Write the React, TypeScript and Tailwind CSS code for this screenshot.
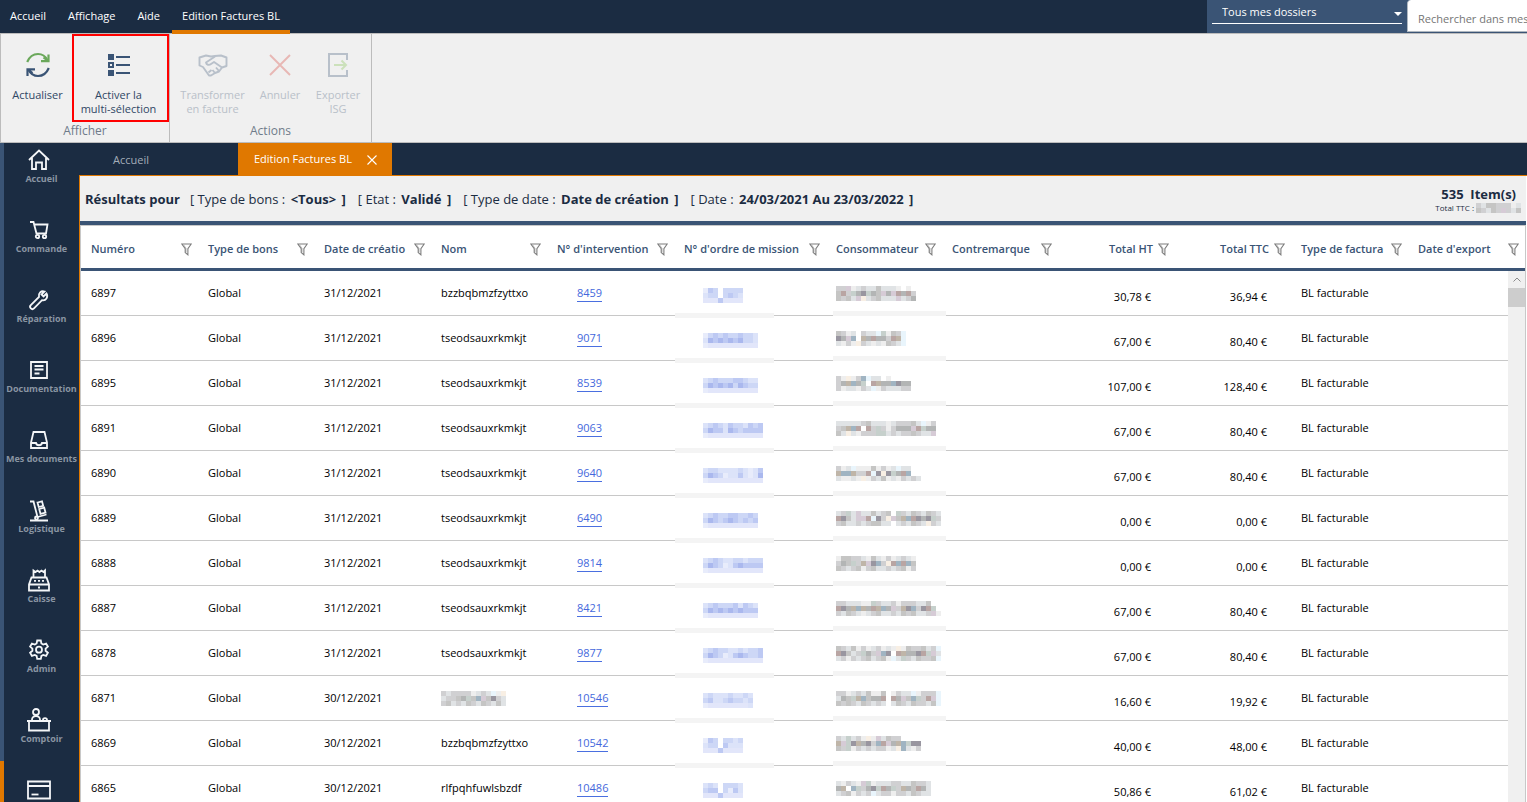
import { ReactNode } from 'react'
import clsx from 'clsx'

type Tone = 'blue' | 'grey'

interface Row {
    numero: string
    date: string
    nom: string | string[]
    intervention: string
    mission: string[]
    consommateur: string[]
    ht: string
    ttc: string
}

const BLUE: Record<string, string> = {
    a: '#e8ecfb',
    b: '#dce3f9',
    c: '#cdd7f6',
    d: '#bdc9f3',
    e: '#aab8ee',
    f: '#e2e6fa',
}

const GREY: Record<string, string> = {
    a: '#eeeeee',
    b: '#e0e3e5',
    c: '#d0d0d2',
    d: '#c5c5c4',
    e: '#b3b5b5',
    f: '#9996a0',
    g: '#b9a5a3',
    h: '#a0b4c2',
    i: '#c6d0cc',
    j: '#bfb5a8',
    k: '#d6cbd6',
    l: '#e9f5fc',
    m: '#f8efe4',
}

const rows: Row[] = [
    {
        numero: '6897', date: '31/12/2021', nom: 'bzzbqbmzfzyttxo', intervention: '8459', ht: '30,78 €', ttc: '36,94 €',
        mission: ['adc.cccc', 'bcc.cdcb', 'fffdffff'],
        consommateur: ['cckabcbbdbbba.a.', 'dgciefiedkekgegc', 'dcdbkmbcdbbbkbce'],
    },
    {
        numero: '6896', date: '31/12/2021', nom: 'tseodsauxrkmkjt', intervention: '9071', ht: '67,00 €', ttc: '80,40 €',
        mission: ['acdcdccdccb', 'bedededeccb', 'affffffffff'],
        consommateur: ['dcab.cbbliadcl', 'fekh.jegeecgjl', 'bacamcbabadcbl'],
    },
    {
        numero: '6895', date: '31/12/2021', nom: 'tseodsauxrkmkjt', intervention: '8539', ht: '107,00 €', ttc: '128,40 €',
        mission: ['bcdcccddcbb', 'cededecedcc', 'affffffffff'],
        consommateur: ['camachlbb.a....', 'cejhei.gjeehfee', 'cabbacblacbbbcc'],
    },
    {
        numero: '6891', date: '31/12/2021', nom: 'tseodsauxrkmkjt', intervention: '9063', ht: '67,00 €', ttc: '80,40 €',
        mission: ['bcdcbdccbdcd', 'ceddbedcdddd', 'afffffffffff'],
        consommateur: ['bbbbbcdbbbabcccdblac', 'cdjhg.gcicaceeekgiee', 'dbmbaccciibcbccdcbbk'],
    },
    {
        numero: '6890', date: '31/12/2021', nom: 'tseodsauxrkmkjt', intervention: '9640', ht: '67,00 €', ttc: '80,40 €',
        mission: ['bccbbbbcbabd', 'cedcabbdbabe', 'afffffffffff'],
        consommateur: ['cablaaadacablbb..', 'jhhjccglfmfiegh..', 'baabamacbdabacbcb'],
    },
    {
        numero: '6889', date: '31/12/2021', nom: 'tseodsauxrkmkjt', intervention: '6490', ht: '0,00 €', ttc: '0,00 €',
        mission: ['bcdccddccdc', 'cedcdedcdcd', 'affffffffff'],
        consommateur: ['bcibkbbdbcd.icbdcbdcb', 'gfdbkkglfcmkdjhgfefic', 'cdbbcbcddbb.bcbdcbmcb'],
    },
    {
        numero: '6888', date: '31/12/2021', nom: 'tseodsauxrkmkjt', intervention: '9814', ht: '0,00 €', ttc: '0,00 €',
        mission: ['bcdcbbccbccc', 'cedcabdedddd', 'afffffffffff'],
        consommateur: ['addccbadbacabcba', 'cedicjkfhcmghghd', 'dcbcdacdbbcbcdac'],
    },
    {
        numero: '6887', date: '31/12/2021', nom: 'tseodsauxrkmkjt', intervention: '8421', ht: '67,00 €', ttc: '80,40 €',
        mission: ['bcdcccdbdcb', 'cededededdd', 'affffffffff'],
        consommateur: ['ccbbbaaicbbcacccbbd..', 'gfejhjegjhekcjfhcfgi.', 'cbdcbabcdbbcbdcdbbcka'],
    },
    {
        numero: '6878', date: '31/12/2021', nom: 'tseodsauxrkmkjt', intervention: '9877', ht: '67,00 €', ttc: '80,40 €',
        mission: ['bcdccbbcbccd', 'cedcabdedccd', 'afffffffffff'],
        consommateur: ['dcbdacabcabamadccdbcl', 'gfdbcieckhf.gjeefgikb', 'bcacbcdbcdalbicbdccdl'],
    },
    {
        numero: '6871', date: '30/12/2021', nom: ['cbccccabcblam', 'bccdeidhkdfcb', 'cdbcbdcbdcbdb'], intervention: '10546', ht: '16,60 €', ttc: '19,92 €',
        mission: ['bcbbbcbbcb', 'cdbbcdccbc', 'affffffffb'],
        consommateur: ['ccabcbdaad.acbblacccl', 'bedijhdeeg.gekdhicgkl', 'dcdcbdcbcb.bdcbdccbdl'],
    },
    {
        numero: '6869', date: '30/12/2021', nom: 'bzzbqbmzfzyttxo', intervention: '10542', ht: '40,00 €', ttc: '48,00 €',
        mission: ['adc.ccbc', 'bcc.dbbb', 'fffdffff'],
        consommateur: ['cbibcamakbdcc....', 'jkifjefchgkejhiff', 'dciacbcbccabmhbac'],
    },
    {
        numero: '6865', date: '30/12/2021', nom: 'rlfpqhfuwlsbzdf', intervention: '10486', ht: '50,86 €', ttc: '61,02 €',
        mission: ['bcb.cccb', 'cdd.cadb', 'fffdffff'],
        consommateur: ['bacbakiabbbccbbdccb', 'ej.hicefigeicjedgeb', 'bcdacbclbccaccbdcbb'],
    },
]

const columns = [
    { label: 'Numéro', width: 'w-[117px]' },
    { label: 'Type de bons', width: 'w-[116px]' },
    { label: 'Date de créatio', width: 'w-[117px]' },
    { label: 'Nom', width: 'w-[116px]' },
    { label: "N° d'intervention", width: 'w-[127px]' },
    { label: "N° d'ordre de mission", width: 'w-[152px]' },
    { label: 'Consommateur', width: 'w-[116px]' },
    { label: 'Contremarque', width: 'w-[116px]' },
    { label: 'Total HT', width: 'w-[117px]', right: true },
    { label: 'Total TTC', width: 'w-[116px]', right: true },
    { label: 'Type de factura', width: 'w-[117px]' },
    { label: "Date d'export", width: 'w-[117px]' },
]

const filters = [
    ['Type de bons', '<Tous>'],
    ['Etat', 'Validé'],
    ['Type de date', 'Date de création'],
    ['Date', '24/03/2021 Au 23/03/2022'],
]

function Mosaic({ lines, tone }: { lines: string[]; tone: Tone }) {
    const palette = tone === 'blue' ? BLUE : GREY
    const cols = Math.max(...lines.map((l) => l.length))
    return (
        <svg width={cols * 5} height={lines.length * 5} shapeRendering="crispEdges" aria-hidden="true" className="block shrink-0">
            {lines.map((line, y) =>
                line.split('').map((c, x) =>
                    palette[c] ? <rect key={`${x}-${y}`} x={x * 5} y={y * 5} width="5" height="5" fill={palette[c]} /> : null
                )
            )}
        </svg>
    )
}

function FilterIcon() {
    return (
        <svg width="11" height="13" viewBox="0 0 11 13" fill="none" stroke="#7d7d7d" className="shrink-0">
            <path d="M.8 1h9.4L6.9 5.6v6.2L4.2 9.6v-4z" strokeWidth="1.1" />
            <path d="M2.5 1.8 5 5.4v4" strokeWidth=".8" opacity=".7" />
        </svg>
    )
}

/* Ribbon icons */

const RefreshIcon = () => (
    <svg width="24" height="26" viewBox="0 0 24 26" fill="none" strokeWidth="2.2">
        <path d="M1.200 10C3.500 4.500 7.500 2 12 2c4 0 7.300 2 9.300 6" stroke="#6ba85b" />
        <path d="M22.500 2.500v6.700h-7.500M22 9l-4.500-3.500" stroke="#6ba85b" />
        <path d="M22.800 16c-2.300 5.500-6.300 8-10.800 8-4 0-7.300-2-9.300-6" stroke="#3a5475" />
        <path d="M1.500 24v-6.700h7.500M2 17.500l4.500 3.500" stroke="#3a5475" />
    </svg>
)

const ListIcon = () => (
    <svg width="24" height="24" viewBox="0 0 24 24" fill="#3a5475">
        <path d="M1 1h6v6H1zM1 17h6v6H1zM9 3h14v2H9zM9 11h14v2H9zM9 19h14v2H9z" />
        <path d="M2 10h4v4H2z" fill="none" stroke="#3a5475" strokeWidth="2" />
    </svg>
)

const HandshakeIcon = () => (
    <svg width="30" height="24" viewBox="0 0 30 24" fill="none" stroke="#3a5475" strokeWidth="1.900" strokeLinejoin="round">
        <path d="M1.500 4.500 8 2.500l5 1 4-.5 6-.5 5.500 2v8.500l-4.500 1.500-3 4-4 1.500-4 2.500h-2L5 14l-3.500-1.500z" />
        <path d="M17 3.500 8 9.500c.5 2.500 3 3 5 1.500l3-2 8 5.500M14.500 17l2.500 3M18 14.500l3 3.500M10.500 19.500l3-2.500" />
    </svg>
)

const CancelIcon = () => (
    <svg width="22" height="22" viewBox="0 0 22 22" fill="none" stroke="#d8382e" strokeWidth="1.900">
        <path d="m1 1 20 20M21 1 1 21" />
    </svg>
)

const ExportIcon = () => (
    <svg width="22" height="26" viewBox="0 0 22 26" fill="none" strokeWidth="2">
        <path d="M20 8V2H2v22h18v-6" stroke="#3a5475" />
        <path d="M7 13h12M14.500 8.500 19 13l-4.500 4.500" stroke="#7cc143" />
    </svg>
)

function RibbonButton({ icon, lines, size, disabled, marked }: { icon: ReactNode; lines: string[]; size: string; disabled?: boolean; marked?: boolean }) {
    return (
        <button
            disabled={disabled}
            className={clsx(
                'flex flex-col items-center border-2 pt-[14px] text-[11px] leading-[14px] text-[#2f4765]',
                size,
                marked ? 'border-[#ff0000]' : 'border-transparent'
            )}
        >
            <span className={clsx('flex h-[30px] items-center', disabled && 'opacity-30')}>{icon}</span>
            <span className={clsx('mt-2 whitespace-nowrap', disabled && 'text-[#b9c0c9]')}>
                {lines.map((line) => (
                    <span key={line} className="block">{line}</span>
                ))}
            </span>
        </button>
    )
}

function RibbonGroup({ title, children }: { title: string; children: ReactNode }) {
    return (
        <section className="flex flex-col border-r border-[#bcbcbc]">
            <div className="flex h-[88px]">{children}</div>
            <h2 className="text-center text-[12px] leading-[18px] text-[#6f7b8a]">{title}</h2>
        </section>
    )
}

/* Side menu */

const sideItems: { label: string; icon: ReactNode }[] = [
    {
        label: 'Accueil',
        icon: <path d="M2 12 12 2.500 22 12M5 10v11h4v-6.500h6V21h4V10" />,
    },
    {
        label: 'Commande',
        icon: (
            <>
                <path d="M3 4h3.500l3 11.500h9.500L20.500 6.500H7.200" />
                <circle cx="10.500" cy="18.500" r="1.700" />
                <circle cx="17.500" cy="18.500" r="1.700" />
            </>
        ),
    },
    {
        label: 'Réparation',
        icon: <path d="M19.500 5.500 16.500 8.500 14.500 6.500 17.500 3.500C14 2.500 11.200 5 12 9L3.800 17.200a2.200 2.200 0 0 0 3.200 3.200L15 12.200c4 .8 6.500-3 4.500-6.700z" />,
    },
    {
        label: 'Documentation',
        icon: (
            <>
                <path d="M4 4h16v16H4z" />
                <path d="M7.500 8h9M7.500 11.500h9M7.500 15.500h5" />
            </>
        ),
    },
    {
        label: 'Mes documents',
        icon: (
            <>
                <path d="M6.500 4h11L20 14.500V20H4v-5.500z" />
                <path d="M4 15h5c.5 3 5.500 3 6 0h5" />
            </>
        ),
    },
    {
        label: 'Logistique',
        icon: (
            <>
                <path d="M3 3.500h3.500L10.500 19l9-2.500M3 22.500h18" />
                <path d="m10.500 4.500 4.500-1.200 1.200 4.500-4.500 1.200zM12.200 11l5-1.300 1.300 4.800-5 1.300z" />
                <circle cx="9.500" cy="20" r="1.500" />
            </>
        ),
    },
    {
        label: 'Caisse',
        icon: (
            <>
                <path d="M6.500 10V2.500l2 1.500 2-1.500 2 1.500 2-1.500 2 1.500 1.500-1.500V10M4.500 9.500h15l2.500 7v6H2v-6zM2 16.500h20" />
                <path d="M7 12.800h10" strokeDasharray="2 2" />
                <path d="M11 19.500h2" />
            </>
        ),
    },
    {
        label: 'Admin',
        icon: (
            <>
                <path d="M10.200 2.500h3.600l.6 3 1.800 1 2.900-1 1.800 3.100-2.300 2v2.200l2.300 2-1.800 3.100-2.900-1-1.800 1-.6 3h-3.600l-.6-3-1.800-1-2.900 1-1.800-3.100 2.300-2v-2.200l-2.300-2 1.800-3.100 2.900 1 1.800-1z" />
                <circle cx="12" cy="11.700" r="3" />
            </>
        ),
    },
    {
        label: 'Comptoir',
        icon: (
            <>
                <circle cx="9" cy="4" r="3" />
                <path d="M5 13v-1.500C5 9.500 7 8 9 8s4 1.500 4 3.500V13M16 12c0-2.500 4-2.500 4 0M0 13h24M2 13v9.500h20V13" />
            </>
        ),
    },
    {
        label: '',
        icon: (
            <>
                <path d="M1 3.500h22v17H1zM1 8h22" />
                <path d="M4.500 16.500h7" />
            </>
        ),
    },
]

function SideMenu() {
    return (
        <nav className="w-[79px] shrink-0 overflow-hidden bg-[#1b2c42]">
            <ul className="-mt-3">
                {sideItems.map((item, i) => (
                    <li key={i}>
                        <a
                            href="#"
                            aria-label={item.label || 'Encaissement'}
                            className={clsx(
                                'flex h-[70px] flex-col items-center border-l-4 pt-[17px]',
                                i === 9 ? 'border-[#e07800]' : 'border-[#3a5475]'
                            )}
                        >
                            <svg width="24" height="24" viewBox="0 0 24 24" fill="none" stroke="#f4f6f8" strokeWidth="1.800" className="mr-[5px] shrink-0">
                                {item.icon}
                            </svg>
                            <span className="whitespace-nowrap text-[9px] font-bold leading-[14px] text-[#8a95a2]">{item.label}</span>
                        </a>
                    </li>
                ))}
            </ul>
        </nav>
    )
}

function TopBar() {
    return (
        <header className="flex h-[33px] shrink-0 bg-[#1b2c42] text-[11px] text-white">
            <nav className="flex gap-[2px]">
                {['Accueil', 'Affichage', 'Aide'].map((label) => (
                    <a key={label} href="#" className="px-[10px] leading-8">{label}</a>
                ))}
                <a href="#" className="z-10 h-[34px] border-b-4 border-[#e07800] px-[10px] leading-8">Edition Factures BL</a>
            </nav>
            <div className="ml-auto flex bg-[#3a5475]">
                <div className="relative w-[200px] px-[5px]">
                    <select aria-label="Dossiers" className="h-6 w-full appearance-none rounded-none border-b border-white bg-transparent pl-[10px] pt-px text-[11px] text-white outline-none">
                        <option>Tous mes dossiers</option>
                    </select>
                    <svg width="8" height="4" viewBox="0 0 8 4" fill="#fff" className="pointer-events-none absolute right-[5px] top-3">
                        <path d="M0 0h8L4 4z" />
                    </svg>
                </div>
                <input
                    type="text"
                    aria-label="Rechercher"
                    placeholder="Rechercher dans mes"
                    className="h-8 w-[120px] rounded-tl-sm border-b border-l border-[#b0b8c0] bg-white pl-[10px] pt-[6px] text-[11px] text-gray-800 outline-none placeholder:text-[#757575]"
                />
            </div>
        </header>
    )
}

function Ribbon() {
    return (
        <div className="flex h-[110px] shrink-0 border border-r-0 border-[#bcbcbc] bg-[#f0f0f0]">
            <RibbonGroup title="Afficher">
                <RibbonButton icon={<RefreshIcon />} lines={['Actualiser']} size="w-[71px] pl-[2px]" />
                <RibbonButton icon={<ListIcon />} lines={['Activer la', 'multi-sélection']} size="w-[97px] pr-1" marked />
            </RibbonGroup>
            <RibbonGroup title="Actions">
                <RibbonButton icon={<HandshakeIcon />} lines={['Transformer', 'en facture']} size="w-[85px]" disabled />
                <RibbonButton icon={<CancelIcon />} lines={['Annuler']} size="w-[50px]" disabled />
                <RibbonButton icon={<ExportIcon />} lines={['Exporter', 'ISG']} size="w-[66px]" disabled />
            </RibbonGroup>
        </div>
    )
}

function Tabs() {
    return (
        <div className="flex h-8 shrink-0 bg-[#1b2c42] text-[11px]">
            <button className="w-[159px] pl-[34px] pt-[2px] text-left text-[#a5aeb9]">Accueil</button>
            <div className="flex w-[154px] items-center justify-between bg-[#e07800] px-4 pr-[15px] pt-px text-white">
                <button className="whitespace-nowrap">Edition Factures BL</button>
                <button aria-label="Fermer">
                    <svg width="10" height="10" viewBox="0 0 10 10" stroke="#fff" strokeWidth="1.100">
                        <path d="m.5.5 9 9M9.500.5l-9 9" />
                    </svg>
                </button>
            </div>
        </div>
    )
}

function Summary() {
    return (
        <div className="flex h-[49px] shrink-0 items-center border-b-4 border-[#3a5475] bg-[#f0f0f0] px-[5px] pt-[2px] text-[#1b2c42]">
            <h1 className="mr-[10px] whitespace-nowrap text-[13px] font-bold">Résultats pour</h1>
            <div className="flex gap-[12px] whitespace-nowrap text-[13px]">
                {filters.map(([name, value]) => (
                    <span key={name}>
                        [ {name} : <b className="mx-[2px]">{value}</b> <b>]</b>
                    </span>
                ))}
            </div>
            <div className="ml-auto flex flex-col items-end">
                <span className="whitespace-pre pr-[5px] text-[13px] font-bold leading-4">535  Item(s)</span>
                <span className="flex items-center gap-[2px] text-[8px] leading-3">
                    Total TTC :
                    <Mosaic tone="grey" lines={['cbddcccab', 'dcbdckcbd']} />
                </span>
            </div>
        </div>
    )
}

function InvoiceTable() {
    return (
        <div className="relative min-h-0 flex-1 overflow-hidden border-x border-t border-[#c8c8c8] bg-white">
            <table className="w-full table-fixed border-separate border-spacing-0 text-[11px] text-black">
                <thead>
                    <tr>
                        {columns.map((col) => (
                            <th key={col.label} scope="col" className={clsx('h-[45px] border-b-3 border-[#3a5475] p-0 pl-[10px] pr-[6px] pt-[5px] text-left font-semibold text-[#3a5475]', col.width)}>
                                <div className="flex items-center gap-[5px]">
                                    <span className={clsx('min-w-0 flex-1 whitespace-nowrap', col.right && 'text-right')}>{col.label}</span>
                                    <FilterIcon />
                                </div>
                            </th>
                        ))}
                    </tr>
                </thead>
                <tbody>
                    {rows.map((row) => (
                        <tr key={row.numero} className="[&>td]:h-[45px] [&>td]:whitespace-nowrap [&>td]:border-b [&>td]:border-[#c8c8c8] [&>td]:py-0 [&>td]:pl-[10px]">
                            <td>{row.numero}</td>
                            <td>Global</td>
                            <td>{row.date}</td>
                            <td>{typeof row.nom === 'string' ? row.nom : <Mosaic lines={row.nom} tone="grey" />}</td>
                            <td>
                                <a href="#" className="ml-5 inline-block border-b border-[#4a6fe0] leading-4 text-[#4468dc]">{row.intervention}</a>
                            </td>
                            <td className="relative">
                                <div className="pl-[19px] pt-1"><Mosaic lines={row.mission} tone="blue" /></div>
                                <span className="absolute left-px top-[42px] z-10 h-[5px] w-[99px] bg-[#f4f4f4]" />
                            </td>
                            <td className="relative">
                                <Mosaic lines={row.consommateur} tone="grey" />
                                <span className="absolute left-[7px] top-10 z-10 h-[5px] w-[113px] bg-[#f4f4f4]" />
                            </td>
                            <td></td>
                            <td><div className="pr-6 pt-2 text-right">{row.ht}</div></td>
                            <td><div className="pr-6 pt-2 text-right">{row.ttc}</div></td>
                            <td>BL facturable</td>
                            <td></td>
                        </tr>
                    ))}
                </tbody>
            </table>
            <div className="absolute bottom-0 right-0 top-[45px] z-20 w-[17px] bg-[#f0f0f0]">
                <div className="flex h-[17px] items-center justify-center">
                    <svg width="8" height="5" viewBox="0 0 8 5" fill="none" stroke="#8a8a8a">
                        <path d="M.5 4.500 4 1l3.500 3.500" />
                    </svg>
                </div>
                <div className="h-[19px] bg-[#cdcdcd]" />
            </div>
        </div>
    )
}

export default function App() {
    return (
        <div className="flex h-screen flex-col overflow-hidden font-['Open_Sans','Noto_Sans',sans-serif]">
            <TopBar />
            <Ribbon />
            <div className="flex min-h-0 flex-1">
                <SideMenu />
                <div className="flex min-w-0 flex-1 flex-col bg-[#1b2c42]">
                    <Tabs />
                    <main className="flex min-h-0 flex-1 flex-col border-l border-t border-[#e07800] bg-white pr-px">
                        <Summary />
                        <InvoiceTable />
                    </main>
                </div>
            </div>
        </div>
    )
}
